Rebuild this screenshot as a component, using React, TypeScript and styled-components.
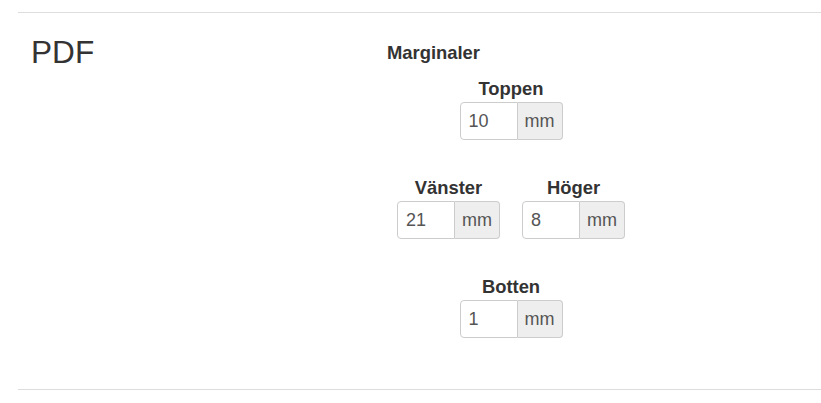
import styled, { createGlobalStyle } from "styled-components";

const GlobalStyle = createGlobalStyle`
  html, body {
    margin: 0;
    padding: 0;
    background: #fff;
    font-family: "Liberation Sans", Arial, sans-serif;
    color: #333;
  }
`;

const Page = styled.div`
  padding-top: 12px;
  padding-left: 18px;
`;

const Rule = styled.hr`
  margin: 0;
  border: 0;
  border-top: 1px solid #ddd;
`;

const Section = styled.div`
  display: flex;
  height: 376px;
`;

const SideCol = styled.div`
  width: 368px;
  padding-left: 13px;
  box-sizing: border-box;
`;

const Heading = styled.h3`
  margin: 22px 0 0;
  font-size: 31.6px;
  line-height: 34px;
  font-weight: 400;
  color: #333;
`;

const FormCol = styled.div`
  width: 250px;
  padding-top: 27px;
`;

const Legend = styled.div`
  padding-left: 1px;
  font-size: 18.4px;
  line-height: 26px;
  font-weight: 700;
  margin-bottom: 10px;
`;

const Row = styled.div<{ $gap?: number }>`
  display: flex;
  justify-content: center;
  gap: ${(p) => p.$gap ?? 0}px;
  & + & {
    margin-top: 35px;
  }
`;

const Field = styled.div`
  display: flex;
  flex-direction: column;
  align-items: center;
`;

const Label = styled.label`
  font-size: 18.4px;
  line-height: 26px;
  font-weight: 700;
  color: #333;
`;

const Group = styled.div`
  display: flex;
  height: 38px;
`;

const Input = styled.input`
  box-sizing: border-box;
  width: 58px;
  height: 38px;
  margin: 0;
  padding: 0 8px;
  border: 1px solid #ccc;
  border-radius: 4px 0 0 4px;
  font-family: "Liberation Sans", Arial, sans-serif;
  font-size: 18px;
  color: #555;
  background: #fff;
  outline: none;
`;

const Addon = styled.span`
  box-sizing: border-box;
  width: 45px;
  height: 38px;
  display: flex;
  align-items: center;
  justify-content: center;
  border: 1px solid #ccc;
  border-left: 0;
  border-radius: 0 4px 4px 0;
  background: #eee;
  font-size: 18px;
  color: #555;
`;

function MarginField({ label, value }: { label: string; value: string }) {
  return (
    <Field>
      <Label>{label}</Label>
      <Group>
        <Input type="text" defaultValue={value} />
        <Addon>mm</Addon>
      </Group>
    </Field>
  );
}

export default function App() {
  return (
    <>
      <GlobalStyle />
      <Page>
        <Rule />
        <Section>
          <SideCol>
            <Heading>PDF</Heading>
          </SideCol>
          <FormCol>
            <Legend>Marginaler</Legend>
            <Row>
              <MarginField label="Toppen" value="10" />
            </Row>
            <Row $gap={22}>
              <MarginField label="Vänster" value="21" />
              <MarginField label="Höger" value="8" />
            </Row>
            <Row>
              <MarginField label="Botten" value="1" />
            </Row>
          </FormCol>
        </Section>
        <Rule />
      </Page>
    </>
  );
}
